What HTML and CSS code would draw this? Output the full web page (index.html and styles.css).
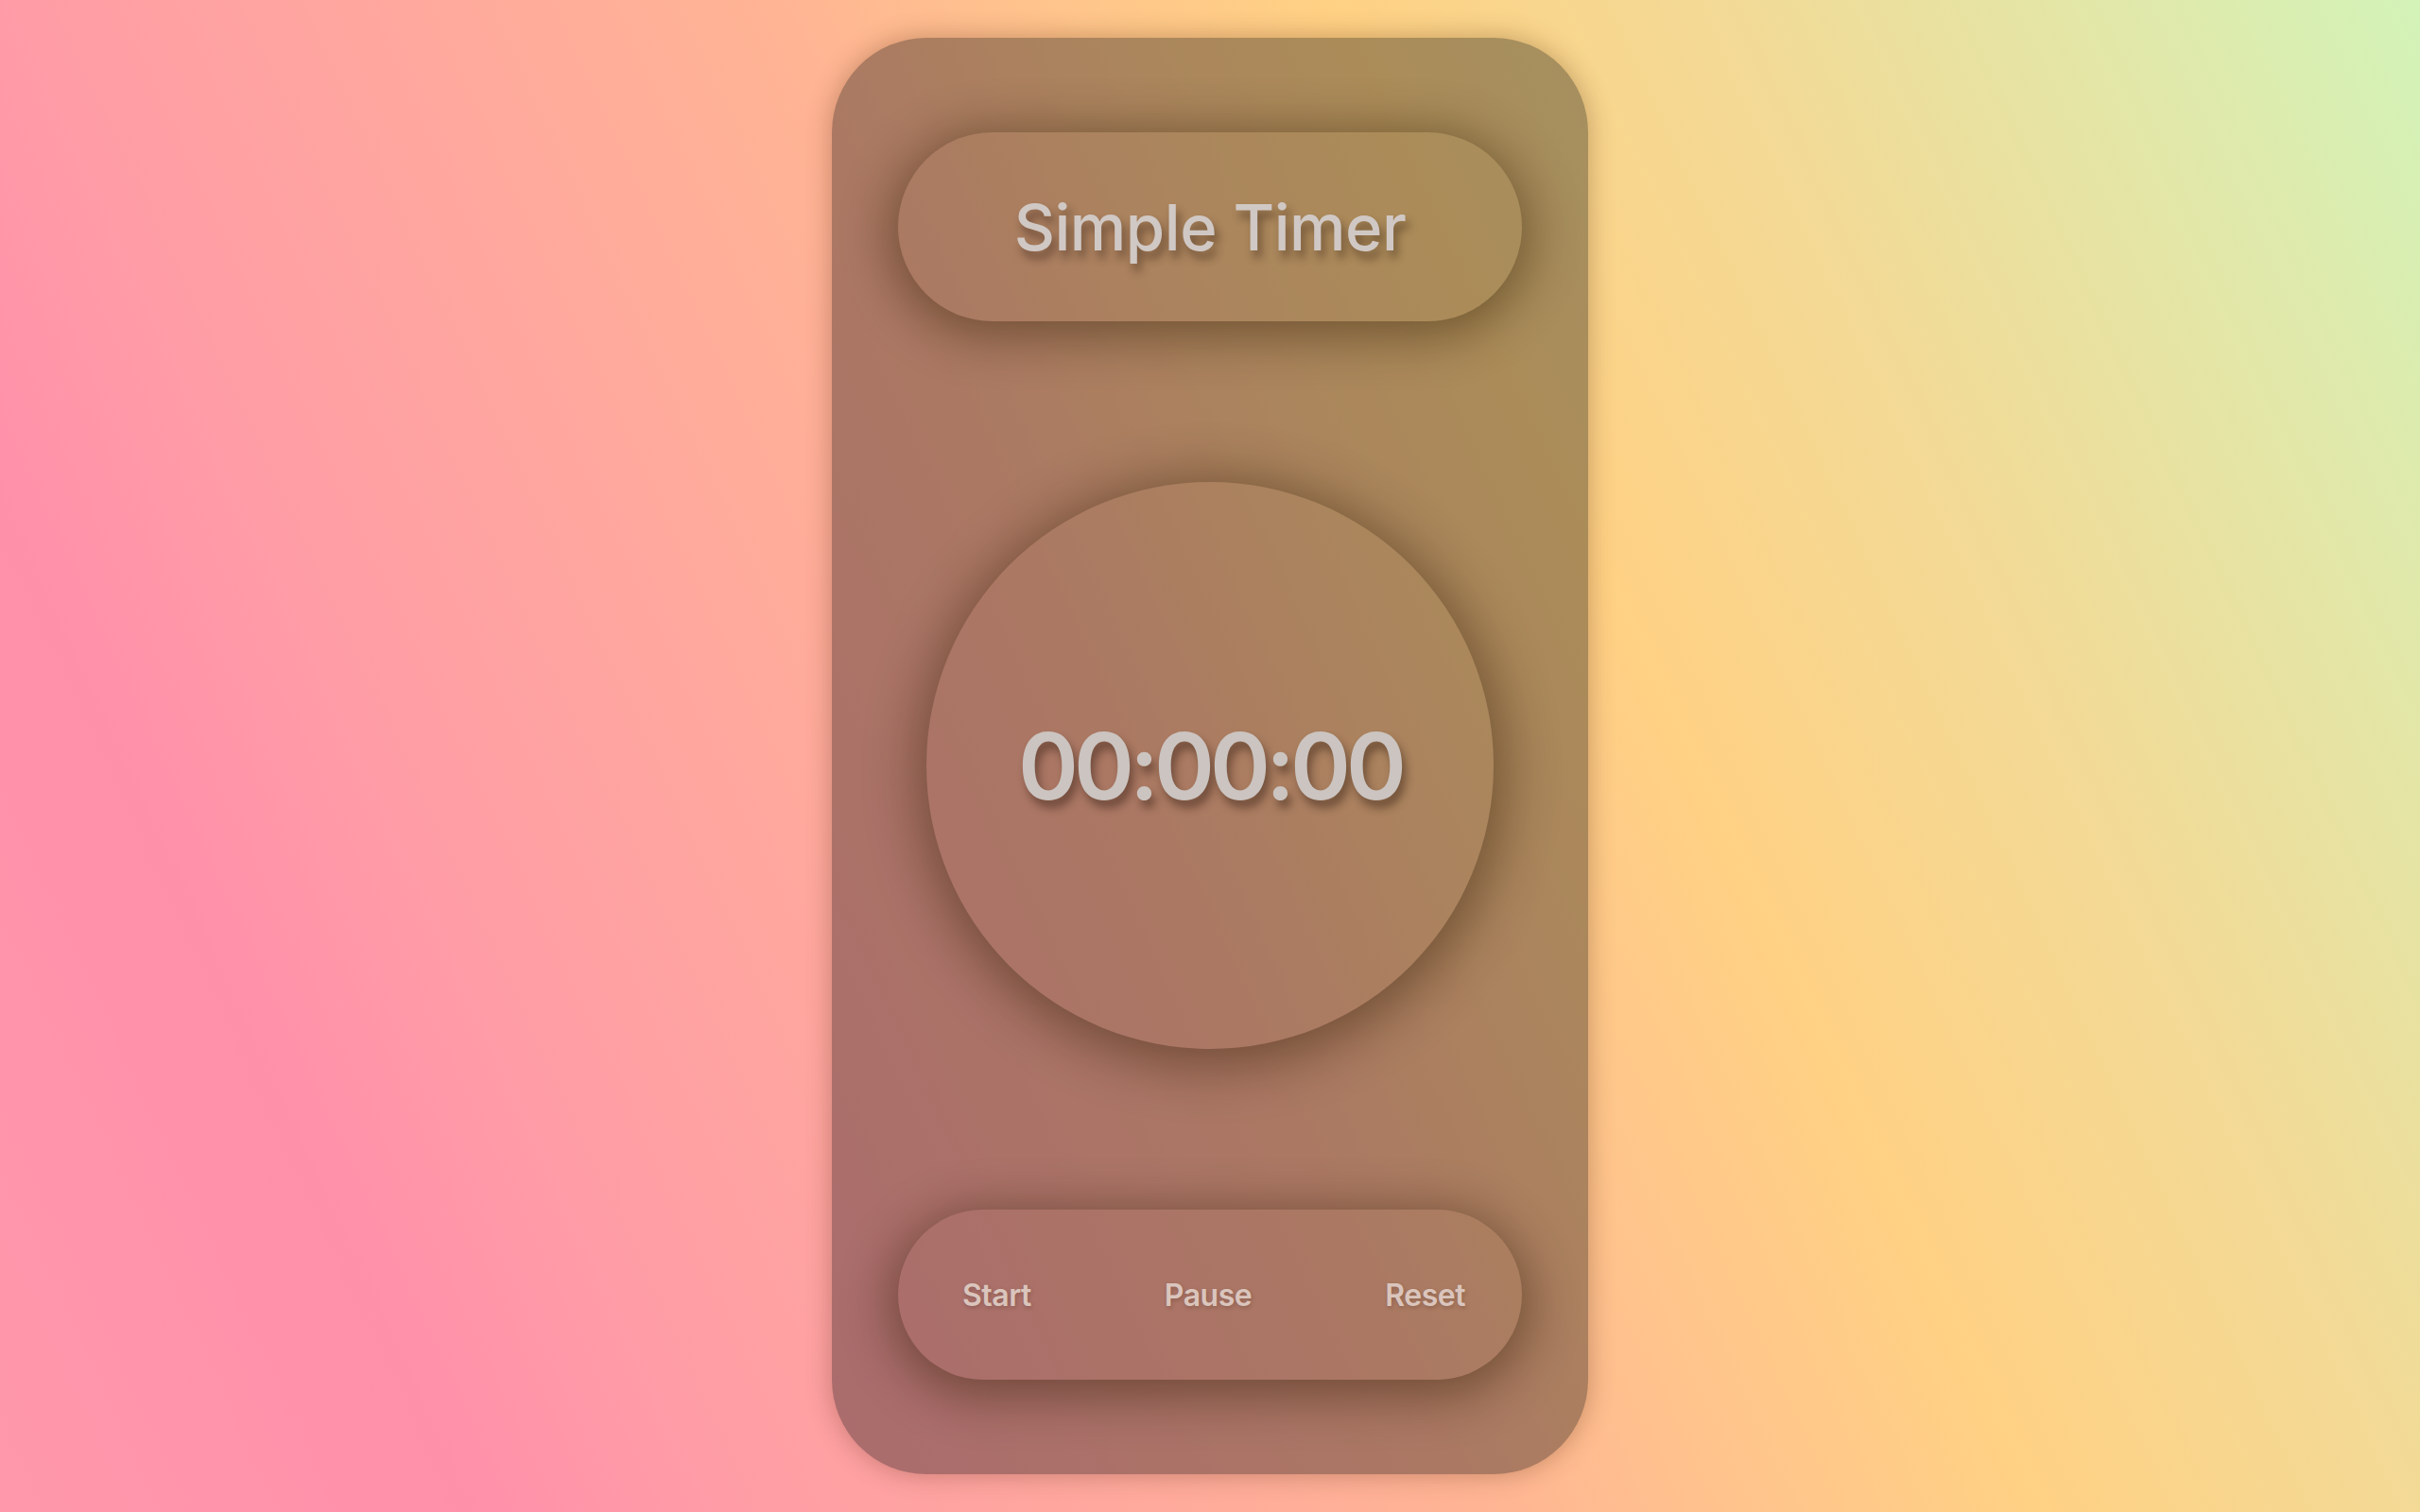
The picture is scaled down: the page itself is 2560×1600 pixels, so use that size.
FILE: index.html
```html
<!DOCTYPE html>
<html lang="en">
<head>
<meta charset="utf-8">
<title>Simple Timer</title>
<link rel="stylesheet" href="styles.css">
</head>
<body>
  <main class="card">
    <header class="title-pill">
      <h1 class="title">Simple Timer</h1>
    </header>
    <section class="dial">
      <span class="time">00:00:00</span>
    </section>
    <nav class="controls">
      <button class="btn">Start</button>
      <button class="btn">Pause</button>
      <button class="btn">Reset</button>
    </nav>
  </main>
</body>
</html>
```

FILE: styles.css
```css
html, body {
  margin: 0;
  padding: 0;
  height: 100%;
}

body {
  min-height: 100vh;
  display: flex;
  align-items: center;
  justify-content: center;
  font-family: "Inter", "Noto Sans", sans-serif;
  background: linear-gradient(65deg,
    #ff98aa 0%,
    #ff90aa 15%,
    #ff9ca6 23%,
    #ffa89e 35%,
    #ffb494 47%,
    #ffc48c 56%,
    #ffd184 65%,
    #f2da96 78%,
    #d3f3b8 100%);
  overflow: hidden;
}

.card {
  box-sizing: border-box;
  width: 800px;
  height: 1520px;
  padding: 100px 70px;
  border-radius: 100px;
  background: rgba(0, 0, 0, 0.33);
  box-shadow: 0 0 26px 2px rgba(90, 45, 20, 0.3);
  display: flex;
  flex-direction: column;
  justify-content: space-between;
  align-items: stretch;
}

.title-pill {
  height: 200px;
  border-radius: 100px;
  display: flex;
  align-items: center;
  justify-content: center;
  box-shadow: 0 8px 52px 8px rgba(45, 25, 0, 0.45);
}

.title {
  margin: 0;
  font-size: 67px;
  font-weight: 500;
  letter-spacing: -0.5px;
  color: #d0c8c4;
  text-shadow: 4px 8px 10px rgba(40, 20, 10, 0.45);
}

.dial {
  align-self: center;
  width: 600px;
  height: 600px;
  border-radius: 50%;
  display: flex;
  align-items: center;
  justify-content: center;
  box-shadow: 2px 8px 56px 10px rgba(45, 25, 0, 0.45);
}

.time {
  font-size: 97px;
  font-weight: 600;
  color: #cbc4c0;
  letter-spacing: -5px;
  text-shadow: 4px 8px 10px rgba(40, 20, 10, 0.45);
}

.controls {
  box-sizing: border-box;
  height: 180px;
  padding: 0 60px 0 68px;
  border-radius: 90px;
  display: flex;
  align-items: center;
  justify-content: space-between;
  box-shadow: 0 10px 52px 8px rgba(45, 25, 0, 0.45);
}

.btn {
  background: none;
  border: none;
  padding: 0;
  font-family: inherit;
  font-size: 32px;
  font-weight: 600;
  letter-spacing: -0.5px;
  color: #dac5bd;
  cursor: pointer;
  text-shadow: 1px 2px 4px rgba(60, 30, 20, 0.25);
}
```
